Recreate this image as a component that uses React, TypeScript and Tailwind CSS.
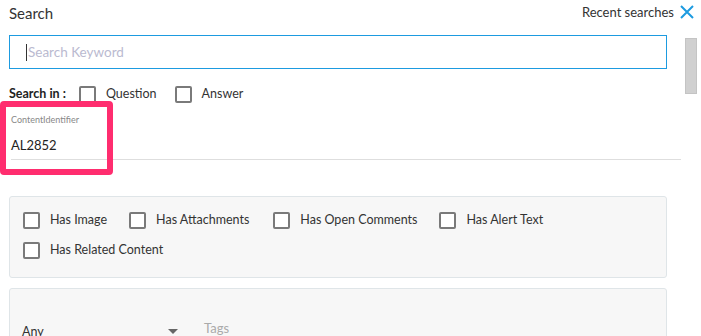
import React from "react";

function Box({ className = "" }: { className?: string }) {
  return (
    <span
      className={
        "inline-block w-[17px] h-[17px] border-2 border-[#7a7a7a] rounded-[2px] bg-white shrink-0 " +
        className
      }
    />
  );
}

function Check({ label, gap = "" }: { label: string; gap?: string }) {
  return (
    <label className={"flex items-center " + gap}>
      <Box />
      <span className="ml-[10px] text-[12.5px] text-[#333]">{label}</span>
    </label>
  );
}

export default function App() {
  return (
    <div
      className="relative w-[701px] h-[336px] overflow-hidden bg-white text-[#333]"
      style={{ fontFamily: "Lato, 'Noto Sans', sans-serif" }}
    >
      {/* header */}
      <div className="flex items-start justify-between h-[35px]">
        <div className="pl-[9px] pt-[3px] text-[15px] leading-[20px] text-[#333]">Search</div>
        <div className="flex items-center pr-[6px] pt-[4px]">
          <span className="text-[13px] leading-[16px] text-[#333]">Recent searches</span>
          <svg width="16" height="16" viewBox="0 0 16 16" className="ml-[5px]">
            <path d="M2 2 L14 14 M14 2 L2 14" stroke="#1d9be0" strokeWidth="2" fill="none" />
          </svg>
        </div>
      </div>

      <div className="flex">
        <div className="w-[681px]">
          {/* input */}
          <div className="ml-[9px] w-[658px] h-[34px] border border-[#1d9be0] flex items-center pl-[16px]">
            <span className="w-px h-[17px] bg-[#333] mr-px" />
            <span className="text-[13.5px] text-[#babad0]">Search Keyword</span>
          </div>

          {/* search in */}
          <div className="flex items-center ml-[9px] mt-[17px] h-[17px]">
            <span className="text-[12.5px] font-bold text-[#222] mr-[13px]">Search in :</span>
            <Box />
            <span className="ml-[10px] text-[12.5px] text-[#333] mr-[18px]">Question</span>
            <Box />
            <span className="ml-[10px] text-[12.5px] text-[#333]">Answer</span>
          </div>

          {/* content identifier */}
          <div className="ml-[11px] mt-[11px] border-b border-[#dedede] pb-[5px]">
            <div className="text-[9px] leading-[12px] text-[#888]">ContentIdentifier</div>
            <div className="mt-[10px] text-[13px] leading-[18px] text-[#222]">AL2852</div>
          </div>

          {/* panel 1 */}
          <div className="ml-[9px] mt-[36px] w-[658px] h-[82px] bg-[#f7f7f7] border border-[#dfe5e8] rounded-[3px] pl-[13px] pt-[15px]">
            <div className="flex items-center h-[17px]">
              <Check label="Has Image" gap="mr-[22px]" />
              <Check label="Has Attachments" gap="mr-[24px]" />
              <Check label="Has Open Comments" gap="mr-[22px]" />
              <Check label="Has Alert Text" />
            </div>
            <div className="flex items-center h-[17px] mt-[13px]">
              <Check label="Has Related Content" />
            </div>
          </div>

          {/* panel 2 */}
          <div className="ml-[9px] mt-[10px] w-[658px] h-[80px] bg-[#f7f7f7] border border-[#dfe5e8] rounded-[3px] pl-[12px] pt-[30px]">
            <div className="flex items-end">
              <div className="w-[170px] flex items-center justify-between pr-[14px]">
                <span className="text-[12.5px] text-[#333]">Any</span>
                <svg width="10" height="6" viewBox="0 0 10 6">
                  <path d="M0 0 L10 0 L5 5 Z" fill="#666" />
                </svg>
              </div>
              <span className="ml-[12px] text-[13px] text-[#aaa] mb-[3px]">Tags</span>
            </div>
          </div>
        </div>

        {/* scrollbar */}
        <div className="w-[20px] pl-[4px] pt-[3px]">
          <div className="w-[12px] h-[56px] bg-[#d0d0d0] border border-[#c4c4c4]" />
        </div>
      </div>

      {/* highlight annotation */}
      <div className="absolute left-0 top-[101px] w-[113px] h-[74px] border-[6px] border-[#ff2d6f] rounded-[4px]" />
    </div>
  );
}
